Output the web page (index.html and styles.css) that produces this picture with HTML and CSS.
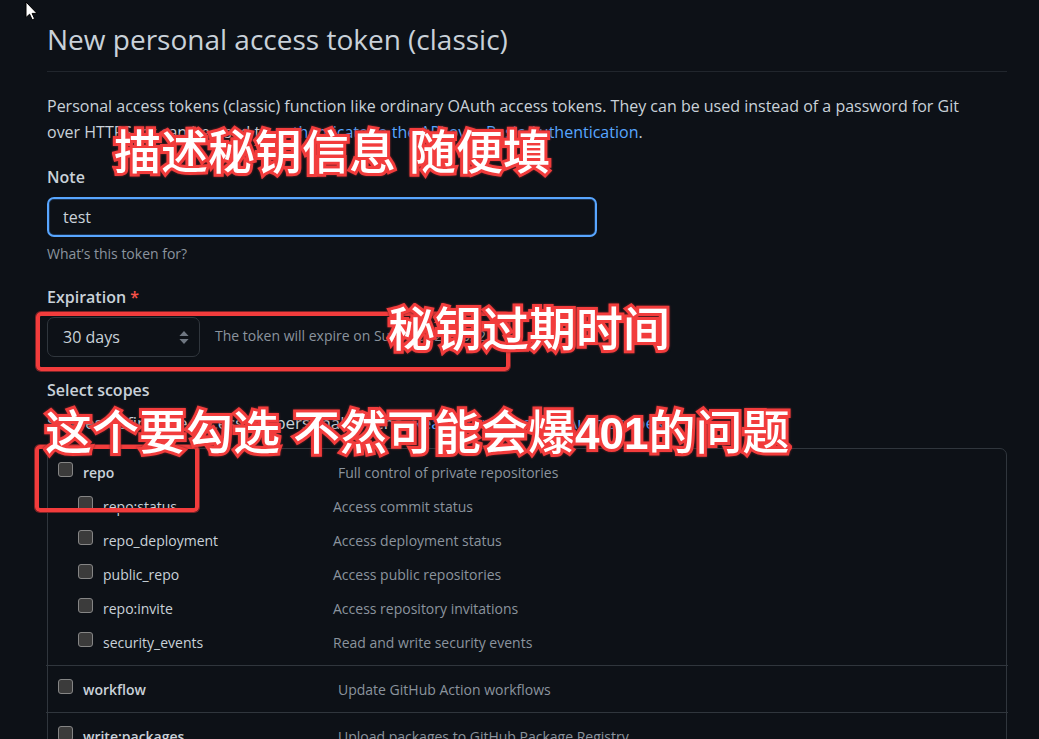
FILE: index.html
```html
<!DOCTYPE html>
<html lang="en">
<head>
<meta charset="utf-8">
<title>New personal access token (classic)</title>
<link rel="stylesheet" href="styles.css">
</head>
<body>
<main class="page">
  <h1 class="title">New personal access token (classic)</h1>
  <p class="intro">Personal access tokens (classic) function like ordinary OAuth access tokens. They can be used instead of a password for Git over HTTPS, or can be used to <a href="#">authenticate to the API over Basic Authentication</a>.</p>

  <form>
    <label class="heading" for="note">Note</label>
    <input class="text-input" id="note" type="text" value="test">
    <p class="hint">What’s this token for?</p>

    <label class="heading" for="expiration">Expiration <span class="required">*</span></label>
    <div class="expiration">
      <div class="select-wrap">
        <select class="select" id="expiration"><option>30 days</option><option>60 days</option><option>90 days</option></select>
        <svg class="select-icon" width="10" height="13" viewBox="0 0 10 13" fill="#6e7681"><path d="M5 0 9.6 5H.4zM5 13 9.6 8H.4z"/></svg>
      </div>
      <span class="expires">The token will expire on Sun, Dec 25 2022</span>
    </div>

    <h2 class="heading">Select scopes</h2>
    <p class="scopes-intro">Scopes define the access for personal tokens. <a href="#">Read more about OAuth scopes.</a></p>

    <ul class="scopes">
      <li class="group">
        <div class="row"><label class="name"><input class="check" type="checkbox">repo</label><span class="desc">Full control of private repositories</span></div>
        <div class="row child"><label class="name"><input class="check" type="checkbox">repo:status</label><span class="desc">Access commit status</span></div>
        <div class="row child"><label class="name"><input class="check" type="checkbox">repo_deployment</label><span class="desc">Access deployment status</span></div>
        <div class="row child"><label class="name"><input class="check" type="checkbox">public_repo</label><span class="desc">Access public repositories</span></div>
        <div class="row child"><label class="name"><input class="check" type="checkbox">repo:invite</label><span class="desc">Access repository invitations</span></div>
        <div class="row child"><label class="name"><input class="check" type="checkbox">security_events</label><span class="desc">Read and write security events</span></div>
      </li>
      <li class="group">
        <div class="row"><label class="name"><input class="check" type="checkbox">workflow</label><span class="desc">Update GitHub Action workflows</span></div>
      </li>
      <li class="group">
        <div class="row"><label class="name"><input class="check" type="checkbox">write:packages</label><span class="desc">Upload packages to GitHub Package Registry</span></div>
      </li>
    </ul>
  </form>
</main>

<div class="frame frame-expiration"></div>
<div class="frame frame-repo"></div>
<div class="callout callout-note">描述秘钥信息 随便填</div>
<div class="callout callout-expiration">秘钥过期时间</div>
<div class="callout callout-scopes">这个要勾选 不然可能会爆<span class="digits">401</span>的问题</div>
<svg class="cursor" width="13" height="20" viewBox="0 0 13 20"><path d="M1 1v15.5l3.6-3.3 2.6 5.6 2.4-1.1-2.5-5.3H12z" fill="#fff" stroke="#000" stroke-width="1"/></svg>
</body>
</html>
```
FILE: styles.css
```css
* { box-sizing: border-box; }
html { height: 100%; overflow: hidden; background: #0d1117; }
body {
  position: relative;
  height: 100%;
  margin: 0;
  overflow: hidden;
  color: #c9d1d9;
  font: 16px/26px "Open Sans", "Noto Sans", sans-serif;
}
a { color: #58a6ff; text-decoration: none; }
.page { padding: 16px 32px 0 47px; }
.title {
  margin: 0 0 21px;
  padding-bottom: 9px;
  border-bottom: 1px solid #21262d;
  font-size: 28px;
  font-weight: 400;
  line-height: 46px;
}
.intro { margin: 0 0 19px; padding-right: 16px; }
.heading {
  display: block;
  margin: 0;
  font-size: 16px;
  font-weight: 600;
  line-height: 26px;
}
.required { color: #f85149; }
.text-input, .select {
  height: 40px;
  padding: 0 16px;
  border: 1px solid #30363d;
  border-radius: 7px;
  outline: none;
  background: #0d1117;
  color: #c9d1d9;
  font: inherit;
}
.text-input {
  display: block;
  width: 550px;
  max-width: 100%;
  margin-top: 7px;
  padding: 0 14px;
  border: 2px solid #58a6ff;
  box-shadow: inset 0 0 0 1px #1c3350;
}
.hint { margin: 4px 0 17px; color: #8b949e; font-size: 14px; }
.expiration { display: flex; gap: 15px; margin: 7px 0 20px; }
.select-wrap { position: relative; }
.select { display: block; width: 153px; padding: 0 15px; appearance: none; }
.select-icon { position: absolute; top: 14px; right: 11px; pointer-events: none; }
.expires { color: #8b949e; font-size: 14px; line-height: 38px; }
.scopes-intro { margin: 7px 0 12px; font-size: 17px; }
.scopes {
  margin: 0;
  padding: 0;
  border: 1px solid #30363d;
  border-radius: 7px;
  list-style: none;
  font-size: 14px;
}
.group { margin: 0 -2px; padding: 7px 12px 5px; }
.group + .group { border-top: 1px solid #30363d; }
.row { display: flex; line-height: 34px; }
.name { display: flex; gap: 10px; width: 280px; font-weight: 600; }
.child .name { width: 275px; padding-left: 20px; font-weight: 400; }
.desc { color: #8b949e; }
.check {
  width: 15px;
  height: 15px;
  margin: 6px 0 0;
  border: 1px solid #858585;
  border-radius: 3px;
  appearance: none;
  background: #3b3b3b;
}
.frame {
  position: absolute;
  border: 4px solid #f23c3c;
  border-radius: 5px;
  box-shadow: 0 0 0 1px #7c2427;
}
.frame-expiration { top: 312px; left: 36px; width: 474px; height: 59px; }
.frame-repo { top: 445px; left: 35px; width: 164px; height: 67px; }
.callout {
  position: absolute;
  color: #fff;
  font: 500 47px/56px "Liberation Sans", "Noto Sans CJK SC", sans-serif;
  white-space: nowrap;
  paint-order: stroke fill;
  -webkit-text-stroke: 6px #f23c3c;
  filter: drop-shadow(0 0 1px #7c2427);
}
.digits { font-size: 44px; font-weight: 700; }
.callout-note { top: 125px; left: 114px; }
.callout-expiration { top: 302px; left: 388px; }
.callout-scopes { top: 405px; left: 45px; }
.cursor { position: absolute; top: 1px; left: 25px; }
```
